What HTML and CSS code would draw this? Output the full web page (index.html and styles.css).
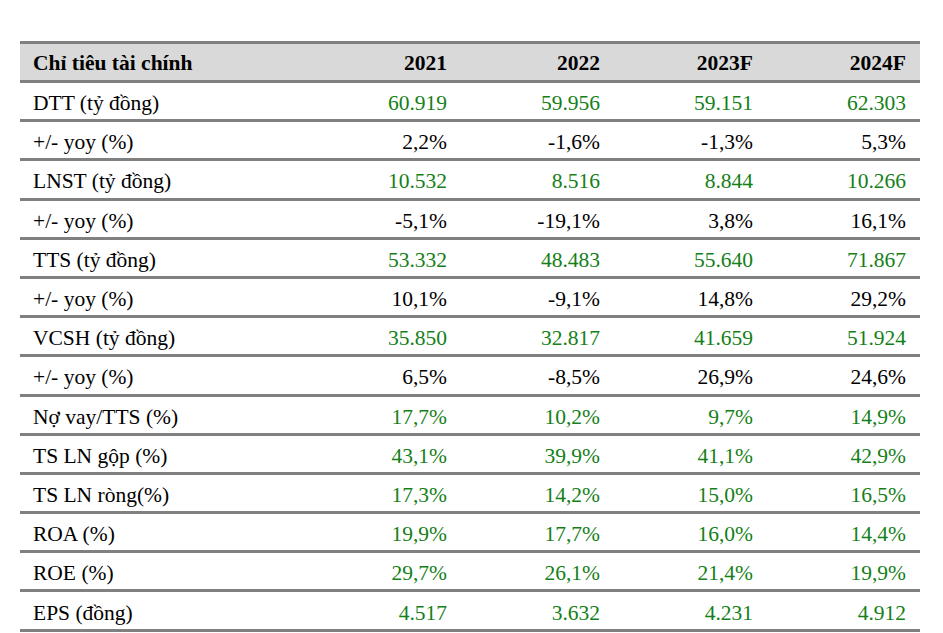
FILE: index.html
```html
<!DOCTYPE html>
<html lang="vi">
<head>
<meta charset="utf-8">
<title>Chỉ tiêu tài chính</title>
<link rel="stylesheet" href="styles.css">
</head>
<body>
<div class="table">
  <div class="row head">
    <div class="cell label">Chỉ tiêu tài chính</div>
    <div class="cell num">2021</div>
    <div class="cell num">2022</div>
    <div class="cell num">2023F</div>
    <div class="cell num">2024F</div>
  </div>
  <div class="row green">
    <div class="cell label">DTT (tỷ đồng)</div>
    <div class="cell num">60.919</div><div class="cell num">59.956</div><div class="cell num">59.151</div><div class="cell num">62.303</div>
  </div>
  <div class="row">
    <div class="cell label">+/- yoy (%)</div>
    <div class="cell num">2,2%</div><div class="cell num">-1,6%</div><div class="cell num">-1,3%</div><div class="cell num">5,3%</div>
  </div>
  <div class="row green">
    <div class="cell label">LNST (tỷ đồng)</div>
    <div class="cell num">10.532</div><div class="cell num">8.516</div><div class="cell num">8.844</div><div class="cell num">10.266</div>
  </div>
  <div class="row">
    <div class="cell label">+/- yoy (%)</div>
    <div class="cell num">-5,1%</div><div class="cell num">-19,1%</div><div class="cell num">3,8%</div><div class="cell num">16,1%</div>
  </div>
  <div class="row green">
    <div class="cell label">TTS (tỷ đồng)</div>
    <div class="cell num">53.332</div><div class="cell num">48.483</div><div class="cell num">55.640</div><div class="cell num">71.867</div>
  </div>
  <div class="row">
    <div class="cell label">+/- yoy (%)</div>
    <div class="cell num">10,1%</div><div class="cell num">-9,1%</div><div class="cell num">14,8%</div><div class="cell num">29,2%</div>
  </div>
  <div class="row green">
    <div class="cell label">VCSH (tỷ đồng)</div>
    <div class="cell num">35.850</div><div class="cell num">32.817</div><div class="cell num">41.659</div><div class="cell num">51.924</div>
  </div>
  <div class="row">
    <div class="cell label">+/- yoy (%)</div>
    <div class="cell num">6,5%</div><div class="cell num">-8,5%</div><div class="cell num">26,9%</div><div class="cell num">24,6%</div>
  </div>
  <div class="row green">
    <div class="cell label">Nợ vay/TTS (%)</div>
    <div class="cell num">17,7%</div><div class="cell num">10,2%</div><div class="cell num">9,7%</div><div class="cell num">14,9%</div>
  </div>
  <div class="row green">
    <div class="cell label">TS LN gộp (%)</div>
    <div class="cell num">43,1%</div><div class="cell num">39,9%</div><div class="cell num">41,1%</div><div class="cell num">42,9%</div>
  </div>
  <div class="row green">
    <div class="cell label">TS LN ròng(%)</div>
    <div class="cell num">17,3%</div><div class="cell num">14,2%</div><div class="cell num">15,0%</div><div class="cell num">16,5%</div>
  </div>
  <div class="row green">
    <div class="cell label">ROA (%)</div>
    <div class="cell num">19,9%</div><div class="cell num">17,7%</div><div class="cell num">16,0%</div><div class="cell num">14,4%</div>
  </div>
  <div class="row green">
    <div class="cell label">ROE (%)</div>
    <div class="cell num">29,7%</div><div class="cell num">26,1%</div><div class="cell num">21,4%</div><div class="cell num">19,9%</div>
  </div>
  <div class="row green">
    <div class="cell label">EPS (đồng)</div>
    <div class="cell num">4.517</div><div class="cell num">3.632</div><div class="cell num">4.231</div><div class="cell num">4.912</div>
  </div>
</div>
</body>
</html>
```
FILE: styles.css
```css
html, body {
  margin: 0;
  padding: 0;
  background: #ffffff;
}
body {
  padding: 41px 0 0 20px;
  font-family: "Liberation Serif", "Times New Roman", serif;
  font-size: 21.5px;
  color: #000000;
}
.table {
  width: 900px;
  border-top: 3px solid #808080;
}
.row {
  display: grid;
  grid-template-columns: 288px repeat(4, 153px);
  height: 36.2px;
  border-bottom: 3px solid #808080;
}
.row.head {
  height: 36px;
  background: #d9d9d9;
  font-weight: bold;
}
.cell {
  display: flex;
  align-items: center;
  line-height: 24px;
  padding-top: 4px;
  box-sizing: border-box;
}
.head .cell {
  padding-top: 2px;
}
.label {
  padding-left: 13px;
  color: #000000;
}
.num {
  justify-content: flex-end;
  padding-right: 14px;
}
.green .num {
  color: #157f18;
}
```
